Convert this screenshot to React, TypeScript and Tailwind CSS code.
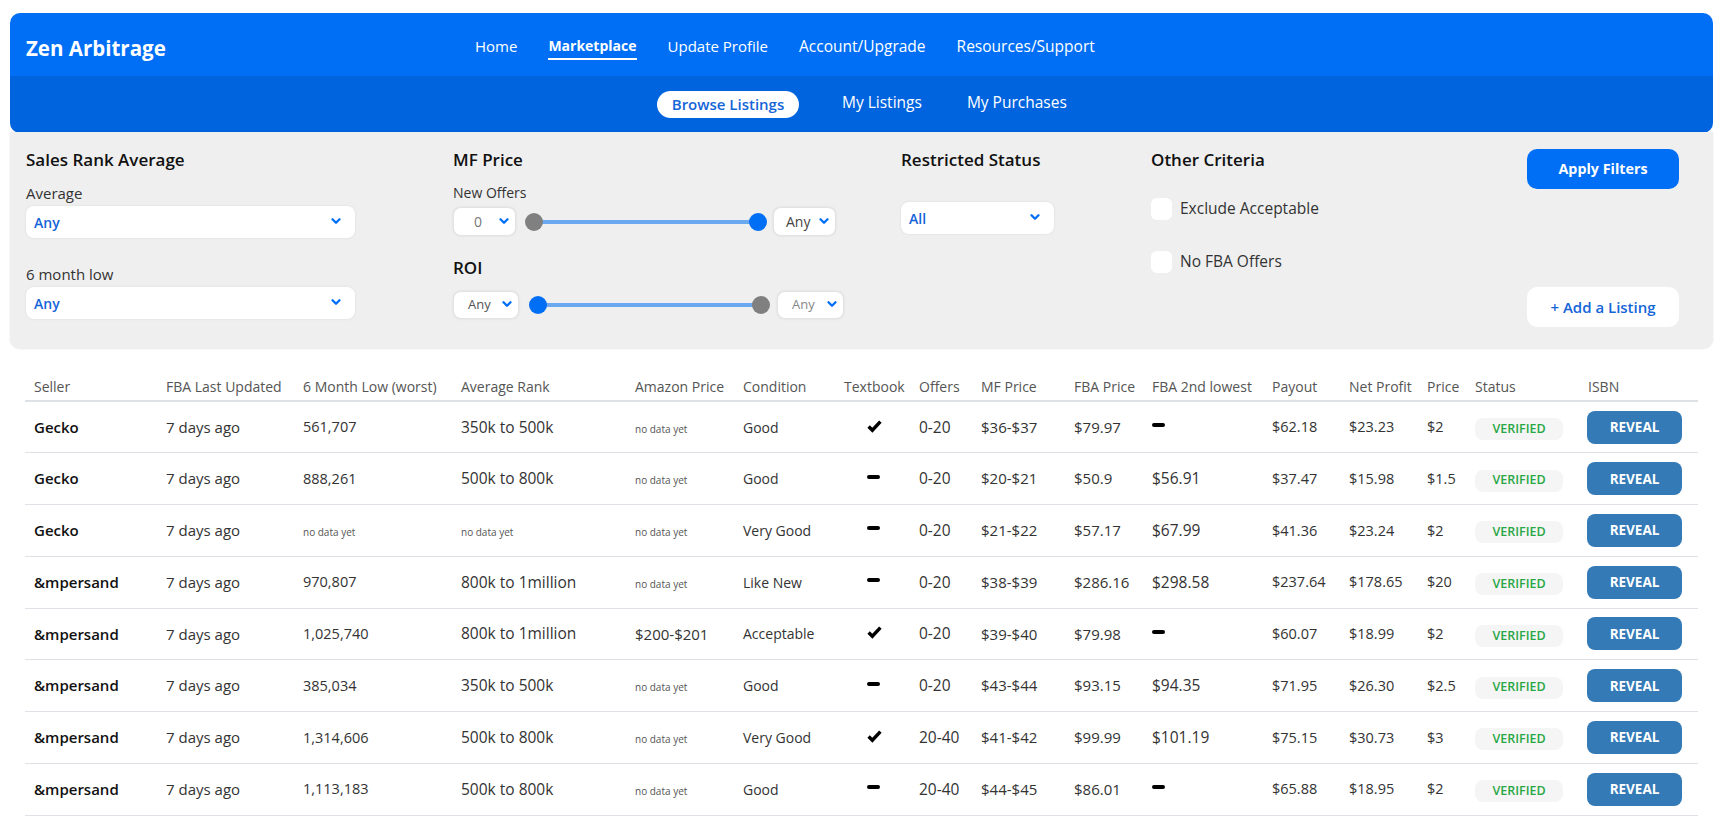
import { ChevronDown } from "lucide-react";

const FONT = "font-['Open_Sans',sans-serif]";

const rows = [
  ["Gecko", "561,707", "350k to 500k", "", "Good", true, "0-20", "$36-$37", "$79.97", "", "$62.18", "$23.23", "$2"],
  ["Gecko", "888,261", "500k to 800k", "", "Good", false, "0-20", "$20-$21", "$50.9", "$56.91", "$37.47", "$15.98", "$1.5"],
  ["Gecko", "", "", "", "Very Good", false, "0-20", "$21-$22", "$57.17", "$67.99", "$41.36", "$23.24", "$2"],
  ["&mpersand", "970,807", "800k to 1million", "", "Like New", false, "0-20", "$38-$39", "$286.16", "$298.58", "$237.64", "$178.65", "$20"],
  ["&mpersand", "1,025,740", "800k to 1million", "$200-$201", "Acceptable", true, "0-20", "$39-$40", "$79.98", "", "$60.07", "$18.99", "$2"],
  ["&mpersand", "385,034", "350k to 500k", "", "Good", false, "0-20", "$43-$44", "$93.15", "$94.35", "$71.95", "$26.30", "$2.5"],
  ["&mpersand", "1,314,606", "500k to 800k", "", "Very Good", true, "20-40", "$41-$42", "$99.99", "$101.19", "$75.15", "$30.73", "$3"],
  ["&mpersand", "1,113,183", "500k to 800k", "", "Good", false, "20-40", "$44-$45", "$86.01", "", "$65.88", "$18.95", "$2"],
] as const;

const headers = ["Seller", "FBA Last Updated", "6 Month Low (worst)", "Average Rank", "Amazon Price", "Condition", "Textbook", "Offers", "MF Price", "FBA Price", "FBA 2nd lowest", "Payout", "Net Profit", "Price", "Status", "ISBN"];

function Select({ label, className }: { label: string; className: string }) {
  return (
    <div className={`flex items-center justify-between bg-white rounded-lg shadow-[0_0_3px_rgba(0,0,0,0.08)] ${className}`}>
      <span>{label}</span>
      <ChevronDown className="w-3.5 h-3.5 mb-[2px] text-[#006ff5]" strokeWidth={4} />
    </div>
  );
}

function Slider({ left, right }: { left: string; right: string }) {
  return (
    <div className="relative flex-1 h-[18px] -mr-[3px]">
      <div className="absolute left-2 right-2 top-[7px] h-1 bg-[#6aa9ef]" />
      <div className={`absolute left-0 top-0 w-[18px] h-[18px] rounded-full ${left}`} />
      <div className={`absolute right-0 top-0 w-[18px] h-[18px] rounded-full ${right}`} />
    </div>
  );
}

function Dash() {
  return <div className="w-[13px] h-1 mb-1 bg-black rounded-sm" />;
}

function NoData() {
  return <span className="text-[10px] text-[#555]">no data yet</span>;
}

export default function App() {
  return (
    <div className={`${FONT} w-[1719px] h-[820px] overflow-hidden bg-white pt-[13px] text-[#333]`}>
      <div className="ml-[10px] w-[1703px]">
        <div className="bg-[#006ff5] rounded-t-[10px] h-[63px] flex items-start text-white">
          <div className="pl-[16px] w-[465px] mt-[21px] text-[20.5px] leading-7 font-bold">Zen Arbitrage</div>
          <nav className="flex items-start gap-[31px] mt-[22px] text-[15px] leading-[22px]">
            <span>Home</span>
            <span className="text-[14px] font-bold pb-px border-b-2 border-white">Marketplace</span>
            <span>Update Profile</span>
            <span className="text-[15.5px]">Account/Upgrade</span>
            <span className="text-[15.5px]">Resources/Support</span>
          </nav>
        </div>
        <div className="bg-[#0064de] rounded-b-[10px] h-[57px] flex items-center text-white text-[15.5px] pl-[647px] gap-[43px]">
          <span className="bg-white text-[#1565d8] font-semibold text-[15px] rounded-full h-[27px] w-[142px] flex items-center justify-center">Browse Listings</span>
          <span className="mb-1">My Listings</span>
          <span className="mb-1 ml-[2px]">My Purchases</span>
        </div>
        <div className="bg-[#efefef] rounded-b-[10px] h-[217px] -mt-px flex text-[15px] shadow-[0_0_2px_rgba(0,0,0,0.1)]">
          <div className="w-[443px] pl-[16px] pt-[16px]">
            <div className="text-[17px] font-semibold text-[#111] leading-6">Sales Rank Average</div>
            <div className="mt-[11px] leading-5">Average</div>
            <Select label="Any" className="w-[329px] h-8 mt-[3px] pl-2 pr-3 text-[14px] font-semibold text-[#1565d8]" />
            <div className="mt-[26px] leading-5">6 month low</div>
            <Select label="Any" className="w-[329px] h-8 mt-[3px] pl-2 pr-3 text-[14px] font-semibold text-[#1565d8]" />
          </div>
          <div className="w-[448px] pt-[16px]">
            <div className="text-[17px] font-semibold text-[#111] leading-6">MF Price</div>
            <div className="mt-[11px] text-[14px] leading-5">New Offers</div>
            <div className="flex items-center w-[383px] h-[29px] mt-[4px] gap-[9px]">
              <Select label="0" className="w-[63px] h-[29px] pl-5 pr-1 text-[14px] text-[#777] border border-[#e3e3e3]" />
              <Slider left="bg-[#808080]" right="bg-[#006ff5]" />
              <Select label="Any" className="w-[63px] h-[29px] pl-3 pr-1 text-[14px] text-[#444] border border-[#e3e3e3]" />
            </div>
            <div className="mt-[20px] text-[17px] font-semibold text-[#111] leading-6">ROI</div>
            <div className="flex items-center w-[391px] h-[28px] mt-[11px] gap-[10px]">
              <Select label="Any" className="w-[66px] h-[28px] pl-[14px] pr-1 text-[13px] text-[#555] border border-[#e3e3e3]" />
              <Slider left="bg-[#006ff5]" right="bg-[#808080]" />
              <Select label="Any" className="w-[67px] h-[28px] pl-[14px] pr-1 text-[13px] text-[#888] border border-[#e3e3e3]" />
            </div>
          </div>
          <div className="w-[250px] pt-[16px]">
            <div className="text-[17px] font-semibold text-[#111] leading-6">Restricted Status</div>
            <Select label="All" className="w-[153px] h-8 mt-[30px] pl-2 pr-3 text-[14px] font-semibold text-[#1565d8]" />
          </div>
          <div className="w-[376px] pt-[16px]">
            <div className="text-[17px] font-semibold text-[#111] leading-6">Other Criteria</div>
            <label className="flex items-center gap-2 mt-[26px] h-[22px] text-[15.5px]">
              <span className="w-[21px] h-[22px] bg-white rounded-md" />
              Exclude Acceptable
            </label>
            <label className="flex items-center gap-2 mt-[31px] h-[22px] text-[15.5px]">
              <span className="w-[21px] h-[22px] bg-white rounded-md" />
              No FBA Offers
            </label>
          </div>
          <div className="w-[152px] pt-[17px] flex flex-col justify-between pb-[22px]">
            <button className="h-10 bg-[#006ff5] text-white font-bold rounded-[10px] text-[14.3px]">Apply Filters</button>
            <button className="h-10 bg-white text-[#1565d8] font-semibold rounded-[10px] text-[15px]">+ Add a Listing</button>
          </div>
        </div>
      </div>
      <table className="ml-[25px] mt-[19px] w-[1673px] table-fixed border-collapse text-[14.5px]">
        <colgroup>
          <col className="w-[132px]" /><col className="w-[137px]" /><col className="w-[158px]" /><col className="w-[174px]" />
          <col className="w-[108px]" /><col className="w-[101px]" /><col className="w-[75px]" /><col className="w-[62px]" />
          <col className="w-[93px]" /><col className="w-[78px]" /><col className="w-[120px]" /><col className="w-[77px]" />
          <col className="w-[78px]" /><col className="w-[48px]" /><col className="w-[113px]" /><col className="w-[119px]" />
        </colgroup>
        <thead>
          <tr className="h-[33px] border-b-2 border-[#dee2e6]">
            {headers.map((h) => (
              <th key={h} className="pl-[9px] pb-[3px] align-bottom text-left font-normal text-[14px] leading-5 text-[#555] whitespace-nowrap">{h}</th>
            ))}
          </tr>
        </thead>
        <tbody>
          {rows.map((r, i) => (
            <tr key={i} className="h-[51.75px] border-b border-[#dee2e6]">
              <td className="pl-[9px] text-[15px] font-semibold text-[#111]">{r[0]}</td>
              <td className="pl-[9px] text-[15px] whitespace-nowrap">7 days ago</td>
              <td className="pl-[9px]">{r[1] || <NoData />}</td>
              <td className="pl-[9px] text-[15.5px]">{r[2] || <NoData />}</td>
              <td className="pl-[9px] text-[15px]">{r[3] || <NoData />}</td>
              <td className="pl-[9px] text-[14px]">{r[4]}</td>
              <td className="pl-[32px]">
                {r[5] ? (
                  <svg viewBox="0 0 14 12" className="w-[15px] h-[13px] mb-[2px]">
                    <path d="M1.5 6 L5 9.5 L12.5 1.5" fill="none" stroke="#000" strokeWidth="3.2" />
                  </svg>
                ) : (
                  <Dash />
                )}
              </td>
              <td className="pl-[9px] text-[15.5px]">{r[6]}</td>
              <td className="pl-[9px] text-[15px]">{r[7]}</td>
              <td className="pl-[9px] text-[15px]">{r[8]}</td>
              <td className="pl-[9px] text-[15.5px]">{r[9] || <Dash />}</td>
              <td className="pl-[9px]">{r[10]}</td>
              <td className="pl-[9px]">{r[11]}</td>
              <td className="pl-[9px]">{r[12]}</td>
              <td className="pl-[9px]">
                <span className="flex items-center justify-center w-[88px] h-[22px] mt-1 rounded-lg bg-[#f5f5f5] text-[12.5px] font-semibold text-[#28a745]">VERIFIED</span>
              </td>
              <td className="pl-[8px]">
                <button className="w-[95px] h-[33px] rounded-lg bg-[#337ab7] text-white text-[13.5px] font-bold">REVEAL</button>
              </td>
            </tr>
          ))}
        </tbody>
      </table>
    </div>
  );
}
